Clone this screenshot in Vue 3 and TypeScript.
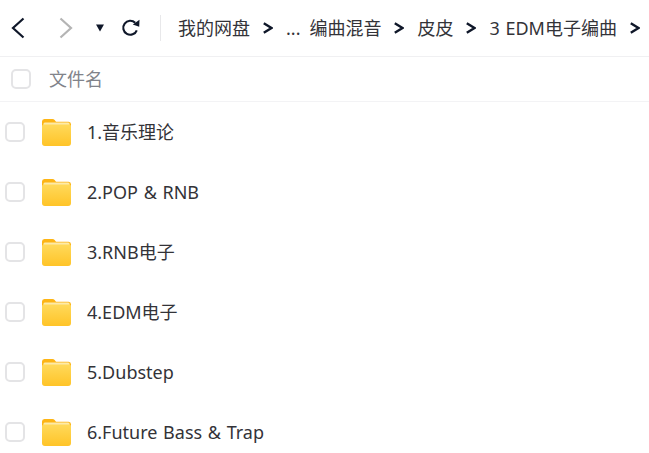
<template>
  <div class="page">
    <!-- Toolbar -->
    <div class="toolbar">
      <div class="nav">
        <svg class="ic-back" width="16" height="24" viewBox="0 0 16 24" fill="none" stroke="#0f1729" stroke-width="2.2">
          <path d="M13.500 2.500 3 12l10.500 9.500"></path>
        </svg>
        <svg class="ic-forward" width="16" height="24" viewBox="0 0 16 24" fill="none" stroke="#b4b4b4" stroke-width="2.2">
          <path d="M2.500 2.500 13 12 2.500 21.500"></path>
        </svg>
        <svg class="ic-down" width="10" height="8" viewBox="0 0 10 8">
          <path d="M1 0.500h8L5 7.500z" fill="#0f1729"></path>
        </svg>
        <svg class="ic-refresh" width="20" height="20" viewBox="0 0 20 20" fill="none">
          <path d="M15.800 12.300A7 7 0 1 1 14.200 4.800" stroke="#0f1729" stroke-width="2.100"></path>
          <path d="M18.500 1.800 18.200 8.800 11.800 6.600z" fill="#0f1729"></path>
        </svg>
      </div>
      <div class="divider"></div>
      <div class="crumbs">
        <template v-for="c in crumbs" :key="c.label">
          <span class="crumb" :class="c.cls">{{ c.label }}</span>
          <svg v-if="c.arrow" class="sep" width="10" height="14" viewBox="0 0 10 14" fill="none" stroke="#0f1729" stroke-width="2.400">
            <path d="M0.800 2.200 8.500 7l-7.700 4.800"></path>
          </svg>
        </template>
      </div>
    </div>

    <!-- Column header -->
    <div class="head">
      <span class="check head-check"></span>
      <span class="head-label">文件名</span>
    </div>

    <!-- Folder rows -->
    <div class="list">
      <div v-for="name in folders" :key="name" class="row">
        <span class="check"></span>
        <svg class="folder" width="29" height="28" viewBox="0 0 30 28" preserveAspectRatio="none">
          <path d="M0 3.500A2.500 2.500 0 0 1 2.500 1h8.300c1 0 1.700.4 2.300 1.100l1.400 1.700h13A2.500 2.500 0 0 1 30 6.300V12H0z" fill="#fdb515"></path>
          <rect x="1.500" y="4.500" width="27" height="6" rx="1.500" fill="#fdeaa8"></rect>
          <path d="M0 8.500C0 7 1 6.500 2.500 6.500H27.500C29 6.500 30 7 30 8.500V25A3 3 0 0 1 27 28H3A3 3 0 0 1 0 25z" fill="url(#fg)"></path>
          <defs>
            <linearGradient id="fg" x1="0" y1="0" x2="0" y2="1">
              <stop offset="0" stop-color="#ffd95a"></stop>
              <stop offset="1" stop-color="#ffc428"></stop>
            </linearGradient>
          </defs>
        </svg>
        <span class="name">{{ name }}</span>
      </div>
    </div>
  </div>
</template>

<script setup lang="ts">
interface Crumb {
  label: string
  arrow: boolean
  cls: string
}

const crumbs: Crumb[] = [
  { label: '我的网盘', arrow: true, cls: 'c1' },
  { label: '...', arrow: false, cls: 'c2' },
  { label: '编曲混音', arrow: true, cls: 'c3' },
  { label: '皮皮', arrow: true, cls: 'c4' },
  { label: '3 EDM电子编曲', arrow: true, cls: 'c5' },
]

const folders: string[] = [
  '1.音乐理论',
  '2.POP & RNB',
  '3.RNB电子',
  '4.EDM电子',
  '5.Dubstep',
  '6.Future Bass & Trap',
]
</script>

<style>
html,
body {
  margin: 0;
  background: #fff;
  overflow: hidden;
}
</style>

<style scoped>
.page {
  width: 649px;
  height: 453px;
  overflow: hidden;
  background: #fff;
  font-family: "Noto Sans", "Noto Sans CJK SC", sans-serif;
  color: #333338;
  word-spacing: 1px;
}

.toolbar {
  display: flex;
  align-items: center;
  height: 56px;
  border-bottom: 1px solid #f0f0f2;
}

.nav {
  display: flex;
  align-items: center;
  padding-left: 10px;
  width: 150px;
  flex: none;
  box-sizing: border-box;
}

.ic-forward {
  margin-left: 32px;
}

.ic-down {
  margin-left: 21px;
}

.ic-refresh {
  margin-left: 16px;
}

.divider {
  width: 1px;
  height: 26px;
  background: #e8e8ea;
  margin-left: 10px;
  flex: none;
}

.crumbs {
  display: flex;
  align-items: center;
  margin-left: 17px;
  white-space: nowrap;
  font-size: 18px;
  line-height: 24px;
}

.sep {
  margin-left: 13px;
  flex: none;
}

.c2 {
  margin-left: 13px;
}

.c3 {
  margin-left: 9px;
}

.c4,
.c5 {
  margin-left: 13px;
}

.head {
  display: flex;
  align-items: center;
  height: 44px;
  border-bottom: 1px solid #f3f3f5;
}

.check {
  display: block;
  width: 20px;
  height: 20px;
  box-sizing: border-box;
  border: 2px solid #e4e4e6;
  border-radius: 5px;
  margin-left: 5px;
  flex: none;
}

.head-check {
  margin-left: 11px;
}

.head-label {
  margin-left: 18px;
  font-size: 18px;
  line-height: 24px;
  color: #81838a;
}

.list {
  display: flex;
  flex-direction: column;
}

.row {
  display: flex;
  align-items: center;
  height: 60px;
}

.folder {
  margin-left: 17px;
  flex: none;
}

.name {
  margin-left: 16px;
  font-size: 18px;
  line-height: 24px;
}
</style>
